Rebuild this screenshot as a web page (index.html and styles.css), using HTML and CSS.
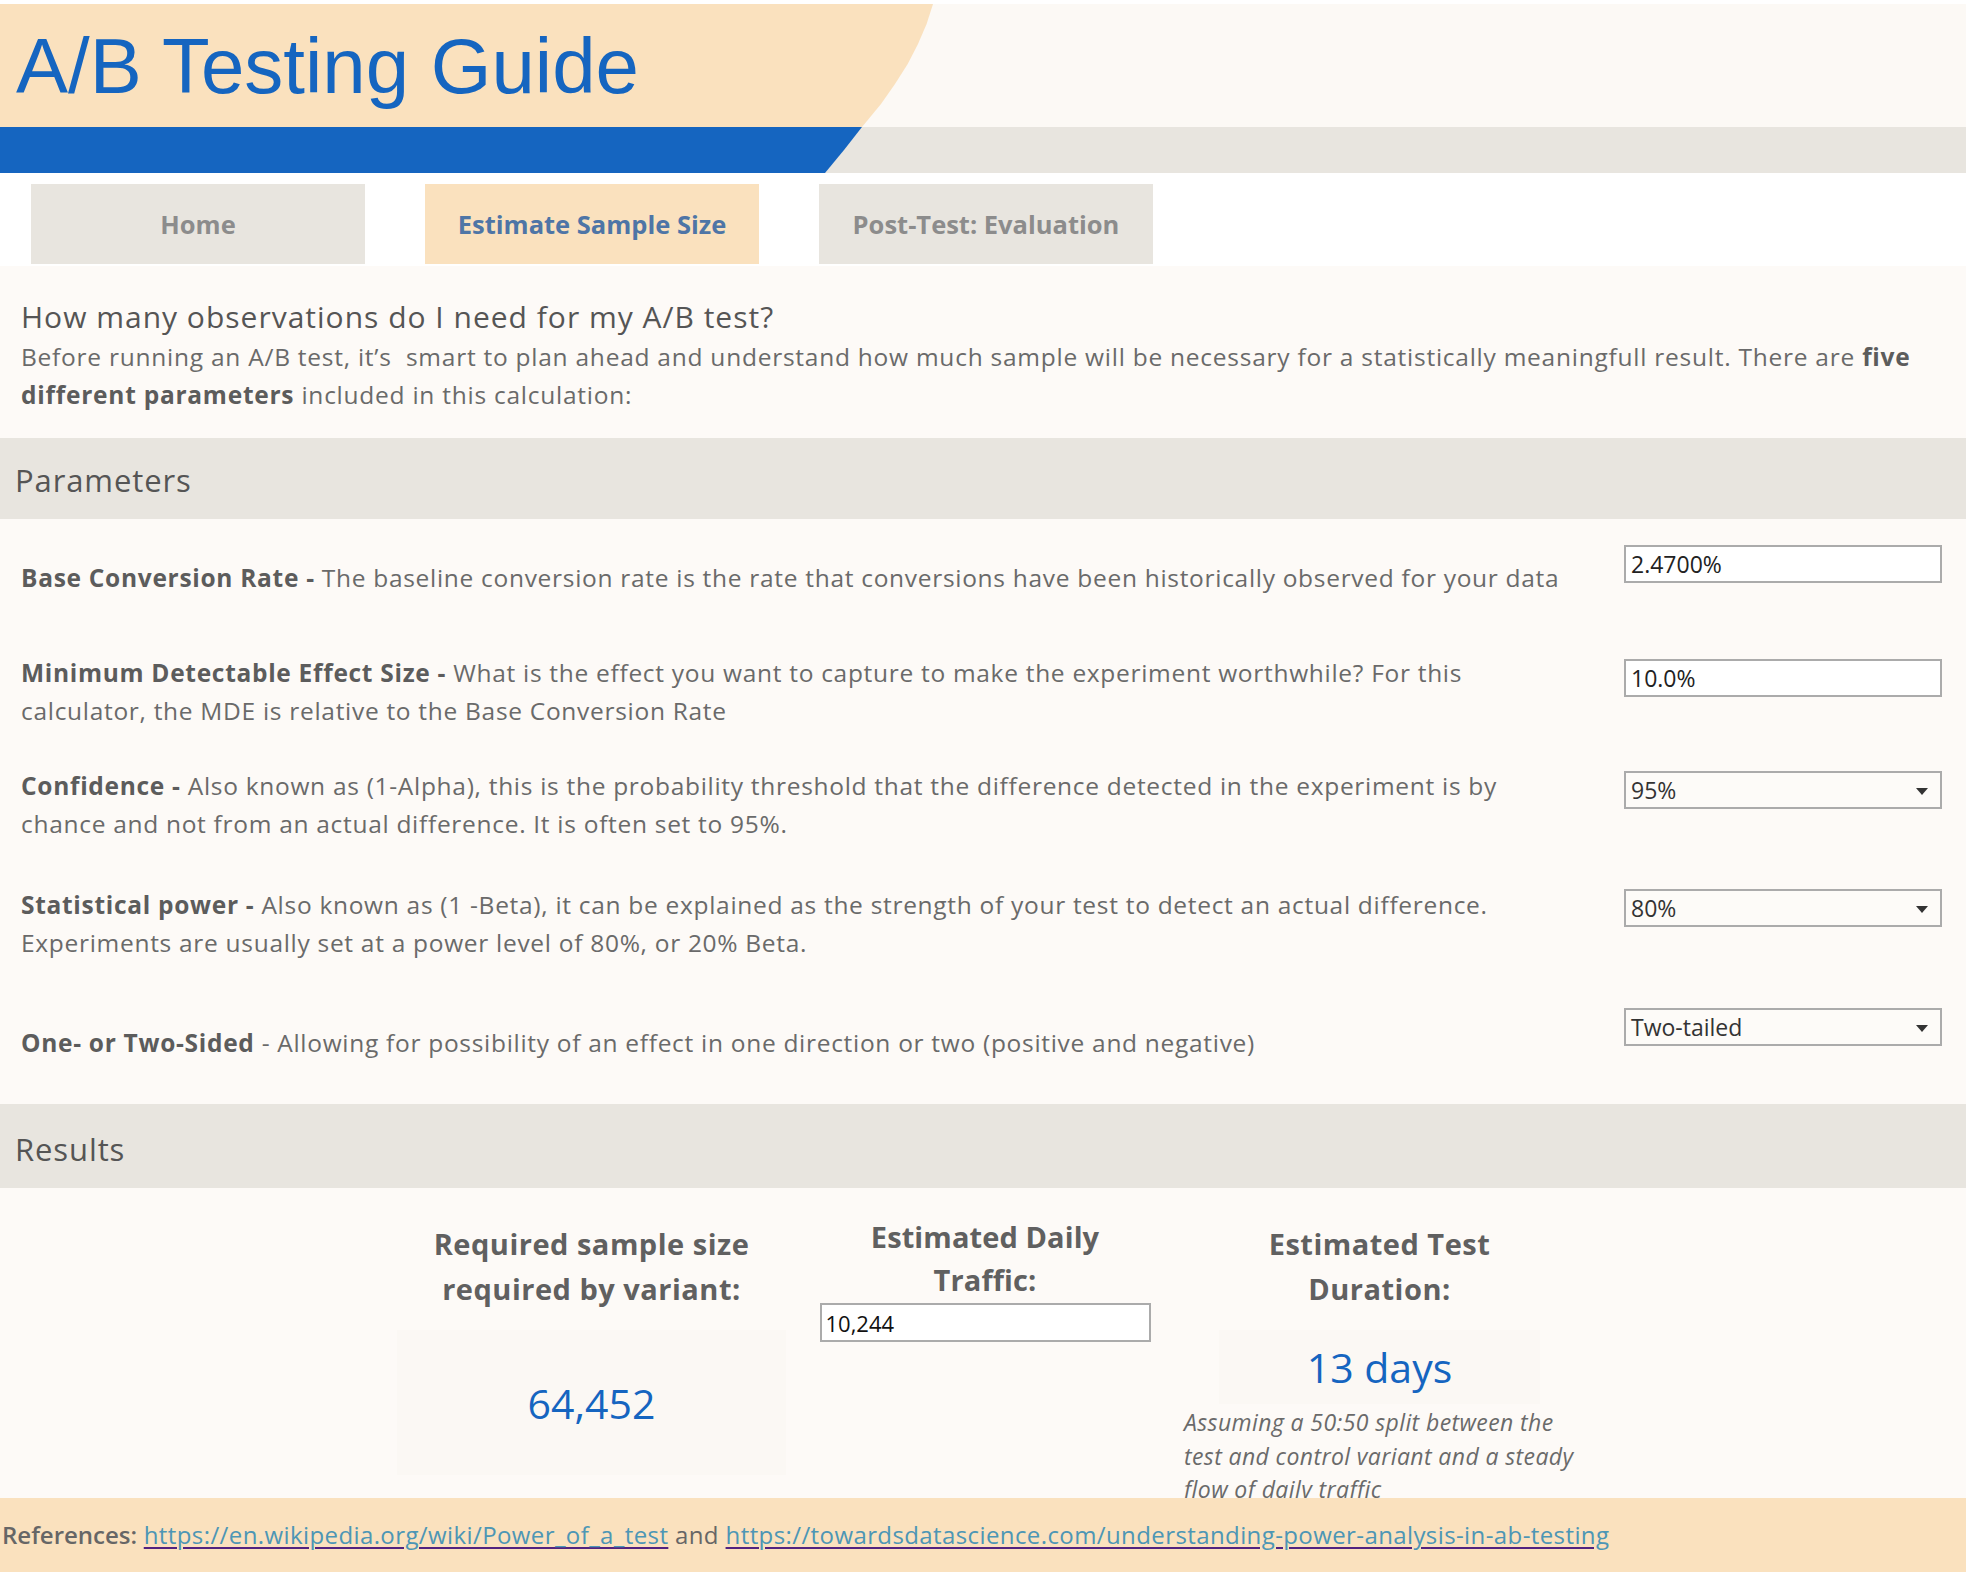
FILE: index.html
```html
<!DOCTYPE html>
<html lang="en">
<head>
<meta charset="utf-8">
<title>A/B Testing Guide</title>
<link rel="stylesheet" href="styles.css">
</head>
<body>
<header class="banner">
  <div class="banner-top">
    <div class="banner-peach">
      <h1 class="title">A/B Testing Guide</h1>
    </div>
  </div>
  <div class="banner-bottom">
    <div class="banner-blue"></div>
  </div>
</header>

<nav class="tabs">
  <div class="tab">Home</div>
  <div class="tab tab-active">Estimate Sample Size</div>
  <div class="tab">Post-Test: Evaluation</div>
</nav>

<main class="content">
  <section class="intro">
    <h2 class="intro-title">How many observations do I need for my A/B test?</h2>
    <p class="intro-text">Before running an A/B test, it’s&nbsp; smart to plan ahead and understand how much sample will be necessary for a statistically meaningfull result. There are <b>five different parameters</b> included in this calculation:</p>
  </section>

  <div class="band band-params">Parameters</div>

  <section class="params">
    <div class="param param-1">
      <p class="param-text"><b>Base Conversion Rate -</b> The baseline conversion rate is the rate that conversions have been historically observed for your data</p>
      <div class="param-control"><input class="field" type="text" value="2.4700%"></div>
    </div>
    <div class="param param-2">
      <p class="param-text"><b>Minimum Detectable Effect Size -</b> What is the effect you want to capture to make the experiment worthwhile? For this calculator, the MDE is relative to the Base Conversion Rate</p>
      <div class="param-control"><input class="field" type="text" value="10.0%"></div>
    </div>
    <div class="param param-3">
      <p class="param-text"><b>Confidence -</b> Also known as (1-Alpha), this is the probability threshold that the difference detected in the experiment is by chance and not from an actual difference. It is often set to 95%.</p>
      <div class="param-control"><div class="dropdown"><span>95%</span><i class="caret"></i></div></div>
    </div>
    <div class="param param-4">
      <p class="param-text"><b>Statistical power -</b> Also known as (1 -Beta), it can be explained as the strength of your test to detect an actual difference. Experiments are usually set at a power level of 80%, or 20% Beta.</p>
      <div class="param-control"><div class="dropdown"><span>80%</span><i class="caret"></i></div></div>
    </div>
    <div class="param param-5">
      <p class="param-text"><b>One- or Two-Sided</b> - Allowing for possibility of an effect in one direction or two (positive and negative)</p>
      <div class="param-control"><div class="dropdown dropdown-strong"><span>Two-tailed</span><i class="caret"></i></div></div>
    </div>
  </section>

  <div class="band band-results">Results</div>

  <section class="results">
    <div class="res-col">
      <h3 class="res-head">Required sample size<br>required by variant:</h3>
      <div class="res-box res-box-sample"><span class="res-value">64,452</span></div>
    </div>
    <div class="res-col">
      <h3 class="res-head res-head-tight">Estimated Daily<br>Traffic:</h3>
      <input class="field field-traffic" type="text" value="10,244">
    </div>
    <div class="res-col">
      <h3 class="res-head">Estimated Test<br>Duration:</h3>
      <div class="res-box res-box-duration"><span class="res-value">13 days</span></div>
      <p class="res-note">Assuming a 50:50 split between the test and control variant and a steady flow of daily traffic</p>
    </div>
  </section>
</main>

<footer class="refs">
  <b>References:</b> <a href="#">https://en.wikipedia.org/wiki/Power_of_a_test</a> and <a href="#">https://towardsdatascience.com/understanding-power-analysis-in-ab-testing</a>
</footer>
</body>
</html>
```

FILE: styles.css
```css
* { box-sizing: border-box; }

body {
  margin: 0;
  padding-top: 4px;
  width: 1966px;
  background: #ffffff;
  font-family: "Open Sans", "Noto Sans", sans-serif;
  color: #6a6a6a;
}

/* ---------- banner ---------- */
.banner-top {
  height: 123px;
  background: #fcf9f5;
}
.banner-peach {
  width: 933px;
  height: 123px;
  background: #fae1be;
  padding: 24px 0 0 16px;
  clip-path: polygon(0 0, 933px 0, 926.6px 20px, 918px 40px, 907.7px 60px, 895px 80px, 881px 100px, 862px 123px, 0 123px);
}
.title {
  margin: 0;
  font-family: "Liberation Sans", Arial, sans-serif;
  font-weight: 400;
  font-size: 78px;
  line-height: 77px;
  color: #1565c0;
  white-space: nowrap;
}
.banner-bottom {
  height: 46px;
  background: #e8e5df;
}
.banner-blue {
  width: 862px;
  height: 46px;
  background: #1565c0;
  clip-path: polygon(0 0, 862px 0, 844px 23px, 825px 46px, 0 46px);
}

/* ---------- tabs ---------- */
.tabs {
  display: flex;
  gap: 60px;
  padding: 11px 0 2px 31px;
  background: #ffffff;
}
.tab {
  width: 334px;
  height: 80px;
  display: flex;
  align-items: center;
  justify-content: center;
  background: #e8e5df;
  color: #8c8c8c;
  font-weight: 700;
  font-size: 25.5px;
}
.tab-active {
  background: #fae1be;
  color: #4e75a6;
}

/* ---------- content ---------- */
.content {
  background: #fdfaf7;
}
.intro {
  height: 172px;
  padding: 32px 20px 0 21px;
}
.intro-title {
  margin: 0 0 2px;
  font-size: 30px;
  line-height: 38px;
  font-weight: 500;
  letter-spacing: 1px;
  color: #555555;
}
.intro-text {
  margin: 0;
  font-size: 24.5px;
  line-height: 37.5px;
  letter-spacing: 0.75px;
}
.intro-text b, .param-text b {
  font-weight: 700;
  color: #5c5c5c;
}

.band {
  background: #e8e5df;
  color: #555555;
  font-size: 31px;
  letter-spacing: 0.9px;
  padding-left: 15px;
}
.band-params {
  height: 81px;
  padding-top: 5px;
  line-height: 75px;
}
.band-results {
  height: 84px;
  padding-top: 7px;
  line-height: 76px;
}

/* ---------- parameters ---------- */
.param {
  display: grid;
  grid-template-columns: 1562px 318px;
  justify-content: space-between;
  padding: 0 24px 0 21px;
}
.param-text {
  margin: 0;
  font-size: 24.5px;
  line-height: 37.5px;
  letter-spacing: 0.7px;
}
.param-1 { height: 113px; }
.param-2 { height: 110px; }
.param-3 { height: 114px; }
.param-4 { height: 116px; }
.param-5 { height: 132px; }
.param-1 .param-text { padding-top: 40px; }
.param-2 .param-text { padding-top: 22px; }
.param-3 .param-text { padding-top: 25px; }
.param-4 .param-text { padding-top: 30px; }
.param-5 .param-text { padding-top: 52px; }
.param-1 .param-control { padding-top: 26px; }
.param-2 .param-control { padding-top: 27px; }
.param-3 .param-control { padding-top: 29px; }
.param-4 .param-control { padding-top: 33px; }
.param-5 .param-control { padding-top: 36px; }

.field {
  display: block;
  width: 318px;
  height: 38px;
  margin: 0;
  padding: 0 0 0 5px;
  border: 2px solid #ababab;
  border-radius: 0;
  background: #ffffff;
  font-family: "Open Sans", "Noto Sans", sans-serif;
  font-size: 23px;
  color: #222222;
  outline: none;
}
.dropdown {
  position: relative;
  display: flex;
  align-items: center;
  width: 318px;
  height: 38px;
  padding-left: 5px;
  border: 2px solid #ababab;
  background: #fdfbf8;
  font-size: 23px;
  color: #333333;
}
.dropdown-strong { font-weight: 500; }
.caret {
  position: absolute;
  right: 12px;
  top: 15px;
  width: 0;
  height: 0;
  border-left: 6px solid transparent;
  border-right: 6px solid transparent;
  border-top: 7px solid #333333;
}

/* ---------- results ---------- */
.results {
  height: 310px;
  overflow: hidden;
  display: grid;
  grid-template-columns: 389px 331px 391px;
  column-gap: 33.5px;
  padding-left: 397px;
}
.res-col {
  display: flex;
  flex-direction: column;
  align-items: stretch;
}
.res-head {
  margin: 33px 0 0;
  text-align: center;
  font-size: 29px;
  line-height: 45px;
  font-weight: 700;
  letter-spacing: 0.5px;
  color: #606060;
}
.res-head-tight {
  margin-top: 27px;
  line-height: 43px;
  letter-spacing: 0.1px;
}
.res-box {
  display: flex;
  align-items: center;
  justify-content: center;
  margin-top: 19px;
  background: #fbf8f4;
}
.res-box-sample { height: 145px; }
.res-box-duration {
  height: 74px;
  margin-left: 35px;
  margin-right: 35px;
}
.res-value {
  font-size: 41px;
  color: #1565c0;
}
.field-traffic {
  width: 331px;
  height: 39px;
  margin-top: 2px;
  padding-left: 4px;
  font-size: 22px;
  color: #111111;
}
.res-note {
  margin: 2px -15px 0 0;
  font-size: 23px;
  line-height: 33.5px;
  letter-spacing: 0.4px;
  font-style: italic;
  color: #6a6a6a;
}

/* ---------- footer ---------- */
.refs {
  height: 74px;
  line-height: 74px;
  padding-left: 2px;
  background: #fae1be;
  font-size: 24px;
  letter-spacing: 0.4px;
  color: #666666;
  white-space: nowrap;
}
.refs b {
  font-weight: 600;
  letter-spacing: 0;
}
.refs a {
  color: #4d96b5;
  text-decoration: underline;
  text-decoration-color: #52237f;
  text-decoration-thickness: 2px;
  text-underline-offset: 3px;
}
```
